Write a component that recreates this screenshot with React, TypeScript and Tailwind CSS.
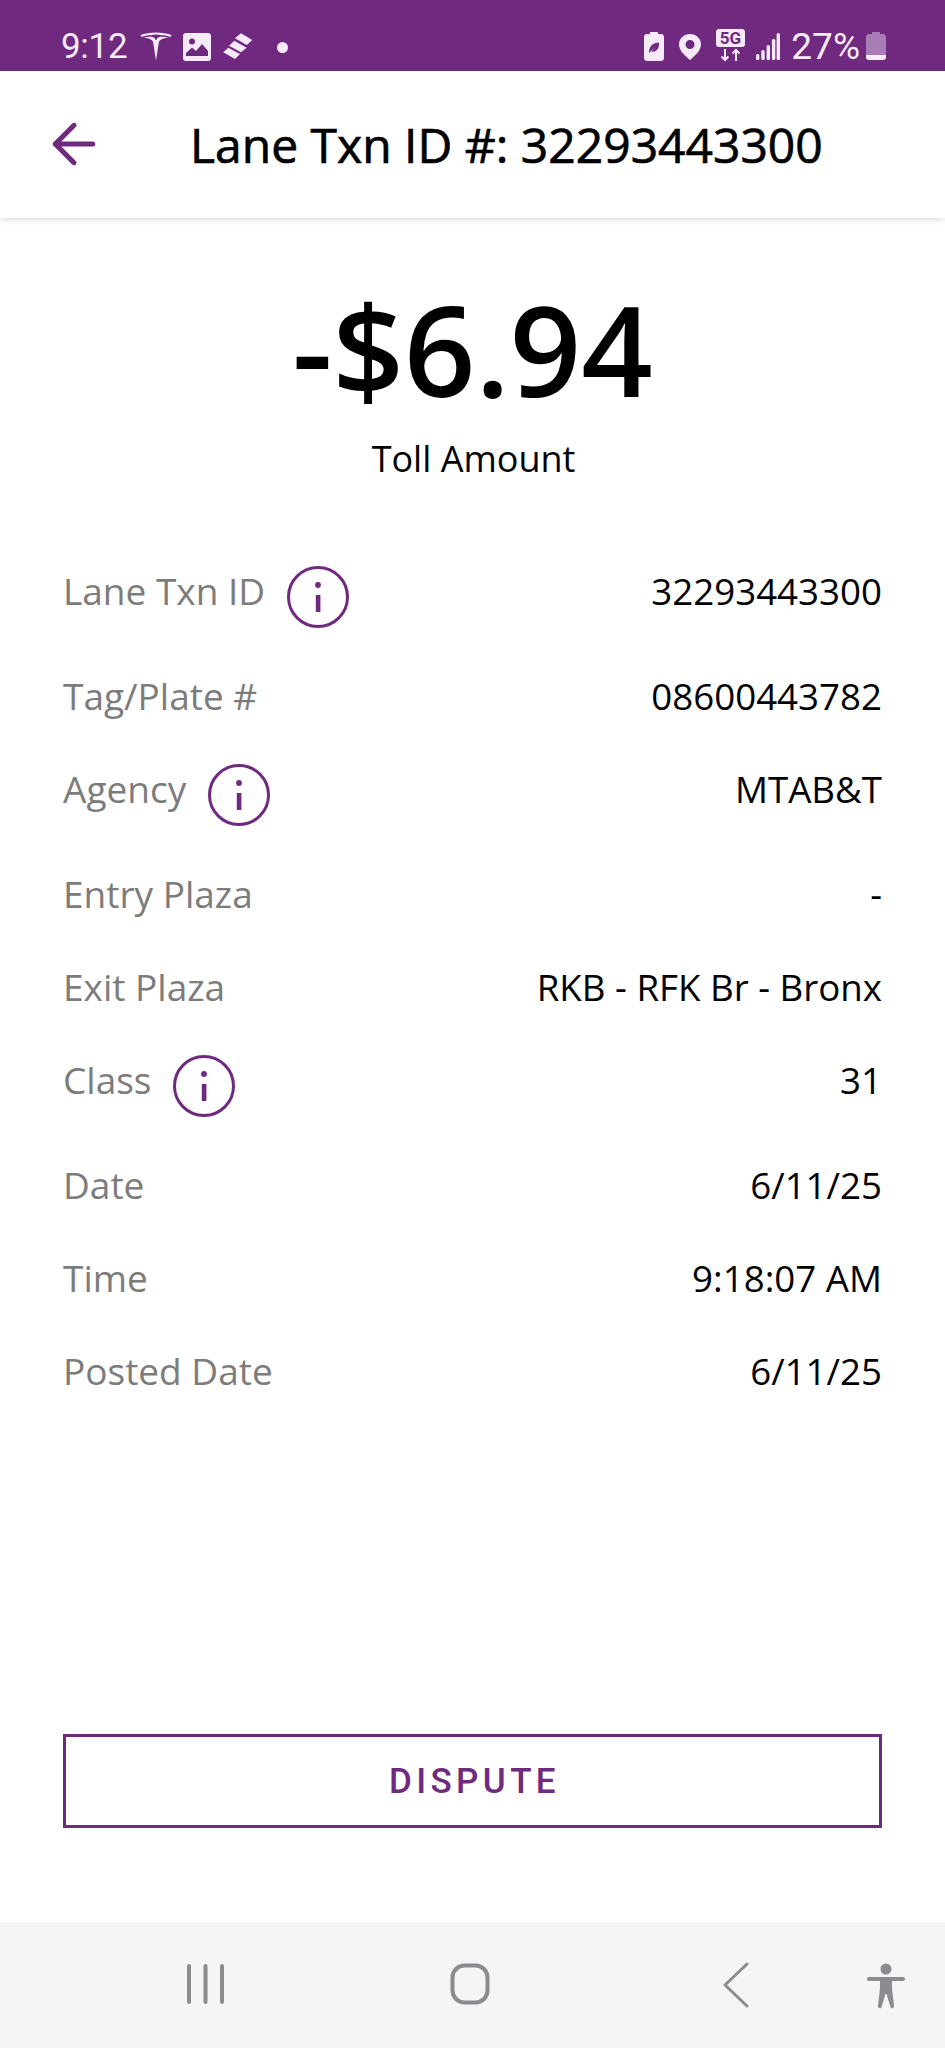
import React from 'react';
import { ArrowLeft } from 'lucide-react';

const PURPLE = '#6f2a80';

const InfoIcon = () => (
  <svg width="64" height="64" viewBox="0 0 64 64" className="ml-[21px] -mt-[2px] shrink-0" fill="none">
    <circle cx="32" cy="32" r="29.5" stroke={PURPLE} strokeWidth="3" />
    <circle cx="32" cy="20" r="2.9" fill={PURPLE} />
    <rect x="29.8" y="30" width="4.6" height="17" fill={PURPLE} />
  </svg>
);

const rows = [
  { label: 'Lane Txn ID', value: '32293443300', info: true },
  { label: 'Tag/Plate #', value: '08600443782' },
  { label: 'Agency', value: 'MTAB&T', info: true },
  { label: 'Entry Plaza', value: '-' },
  { label: 'Exit Plaza', value: 'RKB - RFK Br - Bronx' },
  { label: 'Class', value: '31', info: true },
  { label: 'Date', value: '6/11/25' },
  { label: 'Time', value: '9:18:07 AM' },
  { label: 'Posted Date', value: '6/11/25' },
];

const StatusBar = () => (
  <div className="h-[71px] shrink-0 bg-[#6f2a80] flex items-start justify-between pl-[61px] pr-[59px] pt-[26px] text-[#f6e9f8] font-['Roboto',sans-serif]">
    <div className="flex items-start">
      <span className="text-[35px] leading-[41px] tracking-[-0.3px]">9:12</span>
      <svg width="32" height="30" viewBox="0 0 32 30" className="ml-[13px] mt-[5px]" fill="currentColor">
        <path d="M0.5 4C8 0.5 24 0.5 31.5 4L30.5 6C27 4.6 24 4.2 21 4.2C18 3.4 14 3.4 11 4.2C8 4.2 5 4.6 1.5 6Z" />
        <path d="M3 6.8C6 5.8 9.5 5.6 12.5 6C14.5 6.4 15.2 7.4 15.2 8.8H16.8C16.8 7.4 17.5 6.4 19.5 6C22.5 5.6 26 5.8 29 6.8C26 6.8 22.5 7.4 20.5 9C19 10 18.8 11.5 18.6 13L16 29.5L13.4 13C13.2 11.5 13 10 11.5 9C9.5 7.4 6 6.8 3 6.8Z" />
      </svg>
      <svg width="28" height="28" viewBox="0 0 28 28" className="ml-[11px] mt-[7px]">
        <rect width="28" height="28" rx="3" fill="currentColor" />
        <circle cx="9" cy="8.5" r="3" fill="#6f2a80" />
        <path d="M3 23V20L9 14.5L13 18L19 11L25 18V23Z" fill="#6f2a80" />
      </svg>
      <svg width="30" height="28" viewBox="0 0 30 28" className="ml-[12px] mt-[7px]" fill="currentColor">
        <path d="M12 5.3L18 0.3L29.3 7L23.7 12Z" />
        <path d="M6 12.7L11.3 7.7L23.7 14.7L18 19.3Z" />
        <path d="M0.3 19.3L5.3 14.7L17 21L12 26Z" />
      </svg>
      <div className="ml-[24px] mt-[16px] w-[11px] h-[11px] rounded-full bg-current" />
    </div>
    <div className="flex items-start">
      <svg width="20" height="29" viewBox="0 0 20 29" className="mt-[6px]" fill="currentColor">
        <path d="M6 0H14V2H17C18.7 2 20 3.3 20 5V26C20 27.7 18.7 29 17 29H3C1.3 29 0 27.7 0 26V5C0 3.3 1.3 2 3 2H6Z" />
        <path d="M5 21C5 14 9 10.5 15 10.5C15.5 17 12 20.5 7.5 19.5L11 15.5L6.5 19.5Z" fill="#6f2a80" />
      </svg>
      <svg width="22" height="26" viewBox="0 0 22 26" className="ml-[15px] mt-[8px]" fill="currentColor">
        <path fillRule="evenodd" d="M11 0C17 0 22 4.6 22 10.5C22 17 15.5 22 11 26C6.5 22 0 17 0 10.5C0 4.6 5 0 11 0ZM11 6A4.5 4.5 0 1 0 11 15A4.5 4.5 0 1 0 11 6Z" />
      </svg>
      <svg width="29" height="33" viewBox="0 0 29 33" className="ml-[15px] mt-[3px]">
        <rect width="29" height="18" rx="3" fill="#f6e9f8" />
        <text x="14.5" y="15" textAnchor="middle" fontSize="17" fontWeight="700" fontFamily="Roboto, sans-serif" fill="#6f2a80">5G</text>
        <path d="M9 20V31M5.5 27.5L9 31L12.5 27.5M20 32V21M16.5 24.5L20 21L23.5 24.5" stroke="#f6e9f8" strokeWidth="2" fill="none" />
      </svg>
      <svg width="24" height="27" viewBox="0 0 24 27" className="ml-[11px] mt-[7px]" fill="currentColor">
        <rect x="0" y="21" width="3.4" height="6" rx="1.5" />
        <rect x="5.3" y="17" width="3.4" height="10" rx="1.5" />
        <rect x="10.6" y="12" width="3.4" height="15" rx="1.5" />
        <rect x="15.9" y="6" width="3.4" height="21" rx="1.5" />
        <rect x="20.6" y="0" width="3.4" height="27" rx="1.5" />
      </svg>
      <span className="ml-[11px] text-[37px] leading-[41px]">27%</span>
      <svg width="20" height="28" viewBox="0 0 20 28" className="ml-[6px] mt-[6px]">
        <path d="M6 0H14V2H17C18.7 2 20 3.3 20 5V25C20 26.7 18.7 28 17 28H3C1.3 28 0 26.7 0 25V5C0 3.3 1.3 2 3 2H6Z" fill="#a87cb5" />
        <path d="M0 23H20V25C20 26.7 18.7 28 17 28H3C1.3 28 0 26.7 0 25Z" fill="#f6e9f8" />
      </svg>
    </div>
  </div>
);

const Header = () => (
  <div className="h-[147px] shrink-0 bg-white flex items-center pl-[42px] shadow-[0_2px_6px_rgba(0,0,0,0.14)] relative">
    <ArrowLeft size={64} strokeWidth={1.9} color={PURPLE} className="-mt-[1px] shrink-0" />
    <h1 className="ml-[84px] text-[48px] leading-none font-normal text-black [-webkit-text-stroke:0.7px_#000] font-['Open_Sans',sans-serif] whitespace-nowrap">
      Lane Txn ID #: 32293443300
    </h1>
  </div>
);

const NavBar = () => (
  <div className="h-[126px] shrink-0 bg-[#f5f5f8] flex items-start pt-[41px] pl-[187px]">
    <svg width="38" height="42" viewBox="0 0 38 42" fill="#8c8c90">
      <rect x="0" y="1" width="4" height="40" rx="2" />
      <rect x="16.5" y="1" width="4" height="40" rx="2" />
      <rect x="33" y="1" width="4" height="40" rx="2" />
    </svg>
    <svg width="40" height="42" viewBox="0 0 40 42" className="ml-[225px]" fill="none">
      <rect x="2.5" y="2.5" width="35" height="37" rx="12" stroke="#8c8c90" strokeWidth="4" />
    </svg>
    <svg width="26" height="46" viewBox="0 0 26 46" className="ml-[233px] -mt-[1px]" fill="none">
      <path d="M24 2L2 23L24 44" stroke="#8c8c90" strokeWidth="3" strokeLinecap="round" strokeLinejoin="round" />
    </svg>
    <svg width="38" height="46" viewBox="0 0 38 46" className="ml-[118px]" fill="#8c8c90">
      <circle cx="19" cy="6" r="5.5" />
      <path d="M2 14H36C37.5 14 38 15 38 16S37.5 18 36 18H25C24.5 26 26.5 36 27 43C27 45.5 24 46 23.5 44L19.5 31H18.5L14.5 44C14 46 11 45.5 11 43C11.5 36 13.5 26 13 18H2C0.5 18 0 17 0 16S0.5 14 2 14Z" />
    </svg>
  </div>
);

export default function App() {
  return (
    <div className="w-[945px] h-[2048px] bg-white flex flex-col overflow-hidden font-['Open_Sans',sans-serif]">
      <StatusBar />
      <Header />
      <div className="flex-1 flex flex-col px-[63px]">
        <div className="mt-[66px] text-center text-[125px] leading-[130px] font-semibold text-black">-$6.94</div>
        <div className="mt-[21px] pl-[2px] text-center text-[36px] leading-[48px] text-black">Toll Amount</div>
        <div className="mt-[84px] flex flex-col">
          {rows.map((row) => (
            <div key={row.label} className={`flex items-start justify-between ${row.info ? 'h-[105px]' : 'h-[93px]'}`}>
              <div className="flex items-start">
                <span className="text-[37px] leading-[48px] text-[#7c7c7c]">{row.label}</span>
                {row.info && <InfoIcon />}
              </div>
              <span className="text-[36.7px] leading-[48px] text-black">{row.value}</span>
            </div>
          ))}
        </div>
        <div className="flex-1" />
        <button className="h-[94px] mb-[94px] pl-[4px] pt-[2px] border-[3px] border-[#6f2a80] text-[#6f2a80] text-[35px] font-medium tracking-[4.4px] font-['Roboto',sans-serif]">
          DISPUTE
        </button>
      </div>
      <NavBar />
    </div>
  );
}
